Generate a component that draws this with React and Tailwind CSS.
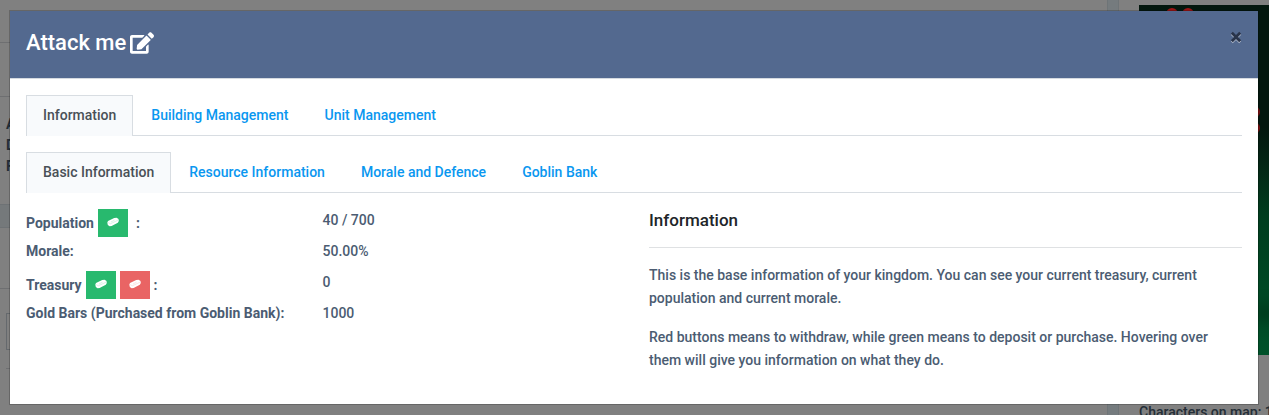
import { FaEdit } from "react-icons/fa";

function GoldBar() {
  return (
    <svg viewBox="0 0 12 10" className="mb-0.5 h-2.5 w-3" aria-hidden="true">
      <path d="M0.3 5.6 1 3.9 7.2 0.9 9.6 0.7 11.5 2 11.8 4 10.8 5.7 4.6 8.9 2.6 9.2 0.8 7.9Z" fill="white" />
      <path d="M1.2 5.6 3.4 6.8 11 3.2M3.9 5 7.6 3.1" stroke="currentColor" strokeWidth="0.4" fill="none" opacity="0.45" />
    </svg>
  );
}

function BarButton({ label, tone }) {
  const color = tone === "red" ? "bg-[#e96464] text-[#e96464]" : "bg-[#28b96e] text-[#28b96e]";
  return (
    <button type="button" aria-label={label} className={`flex h-7 w-[30px] items-center justify-center ${color}`}>
      <GoldBar />
    </button>
  );
}

function Tabs({ label, items }) {
  return (
    <div role="tablist" aria-label={label} className="flex border-b border-[#d8dde2]">
      {items.map((item, i) => (
        <button
          key={item}
          type="button"
          role="tab"
          aria-selected={i === 0}
          className={
            i === 0
              ? "-mb-px h-[41px] border border-b-0 border-[#d8dde2] bg-[#f8fafc] px-4 pb-0.5 text-[#495057]"
              : "h-10 px-[18px] text-[#0a97f0]"
          }
        >
          {item}
        </button>
      ))}
    </div>
  );
}

function Row({ name, children, value }) {
  return (
    <div className="flex h-[31px] items-start leading-[23px]">
      <dt className="flex w-1/2 items-center font-bold whitespace-nowrap">
        {name}
        {children}
      </dt>
      <dd className="w-1/2">{value}</dd>
    </div>
  );
}

function MapView() {
  return (
    <div className="relative h-[350px] overflow-hidden bg-linear-to-b from-[#03170e] from-35% via-[#003d1e] via-60% to-[#00522a]">
      <span className="absolute top-[3px] left-[27px] h-4 w-3 rounded-full border-3 border-[#9b1516]" />
      <span className="absolute top-[3px] left-[43px] h-4 w-3 rounded-full border-3 border-[#9b1516]" />
      <span className="absolute top-[101px] left-[109px] h-3 w-3 rounded-full bg-[#7d1112]" />
      <span className="absolute top-[117px] left-[109px] h-3 w-3 rounded-full bg-[#7d1112]" />
      <span className="absolute top-[300px] left-[116px] h-4 w-5 rounded-full bg-[#00210f] opacity-60 blur-sm" />
    </div>
  );
}

function Page() {
  return (
    <div className="flex min-h-screen overflow-hidden bg-[#808080] text-[#242e37]" aria-hidden="true">
      <div className="flex-1">
        <div className="h-[43px] border-b border-[#6e6f71]" />
        <div className="h-[54px] border-b border-[#6e6f71]" />
        <div className="h-[107px] pt-[17px] pl-1.5 font-bold leading-[21px]">
          <div>A</div>
          <div>D</div>
          <div>F</div>
        </div>
        <div className="h-6 border-y border-[#6e7275] bg-[#75797b]" />
        <div className="h-[61px] border-b border-[#6e6f71]" />
        <div className="mt-6 ml-1.5 h-[37px] border border-[#65696d]" />
        <div className="mt-[18px] ml-1.5 border-t border-[#6e6f71]" />
      </div>
      <div className="w-3 border-x border-[#6e7477] bg-[#757b7e]" />
      <div className="w-[150px] pt-[5px] pl-5">
        <MapView />
        <div className="mt-[46px] whitespace-nowrap leading-[23px]">Characters on map: 1</div>
      </div>
    </div>
  );
}

export default function App() {
  return (
    <div className="relative font-[Roboto,sans-serif] text-[14px] font-medium">
      <Page />
      <div className="absolute inset-0 px-[9px] pt-[10px]">
        <section role="dialog" aria-labelledby="title" className="mr-px border border-black/20 bg-white bg-clip-padding text-[#4b5c72]">
          <header className="flex h-[68px] items-start justify-between border-b border-[#d5dae0] bg-[#53698f] px-4 pt-4">
            <h1 id="title" className="flex items-center gap-1 text-[22px] leading-8 font-medium text-white">
              Attack me
              <button type="button" aria-label="Rename kingdom">
                <FaEdit className="size-6" />
              </button>
            </h1>
            <button type="button" aria-label="Close" className="text-[#29344a] drop-shadow-[0_1px_0_#ffffff90]">
              <svg viewBox="0 0 12 12" className="my-1 size-3" aria-hidden="true">
                <path d="M1.8 1.8 10.2 10.2M10.2 1.8 1.8 10.2" stroke="currentColor" strokeWidth="2.8" />
              </svg>
            </button>
          </header>
          <div className="px-4 pt-4 pb-8">
            <Tabs label="Kingdom" items={["Information", "Building Management", "Unit Management"]} />
            <div className="mt-4">
              <Tabs label="Kingdom details" items={["Basic Information", "Resource Information", "Morale and Defence", "Goblin Bank"]} />
            </div>
            <div className="mt-4 grid grid-cols-2 gap-[30px]">
              <dl>
                <Row name="Population" value="40 / 700">
                  <span className="mr-2 ml-1"><BarButton label="Purchase population" /></span>:
                </Row>
                <Row name="Morale:" value="50.00%" />
                <Row name="Treasury" value="0">
                  <span className="mx-1 flex gap-1">
                    <BarButton label="Deposit" />
                    <BarButton label="Withdraw" tone="red" />
                  </span>
                  :
                </Row>
                <Row name="Gold Bars (Purchased from Goblin Bank):" value="1000" />
              </dl>
              <div className="leading-[23px]">
                <h2 className="text-[17px] leading-[22px] font-medium text-[#212529]">Information</h2>
                <hr className="my-4 border-[#dfe1e3]" />
                <p>
                  This is the base information of your kingdom. You can see your current treasury, current population and
                  current morale.
                </p>
                <p className="mt-4">
                  Red buttons means to withdraw, while green means to deposit or purchase. Hovering over them will give you
                  information on what they do.
                </p>
              </div>
            </div>
          </div>
        </section>
      </div>
    </div>
  );
}
